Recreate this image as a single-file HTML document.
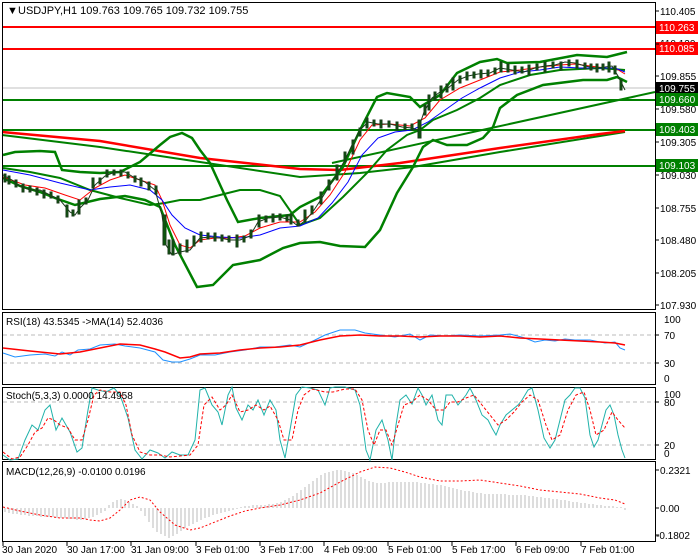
<!DOCTYPE html>
<html><head><style>
html,body{margin:0;padding:0;background:#fff;width:700px;height:560px;overflow:hidden}
svg{display:block;font-family:"Liberation Sans",sans-serif}
</style></head><body>
<svg width="700" height="560" viewBox="0 0 700 560" xmlns="http://www.w3.org/2000/svg">
<rect width="700" height="560" fill="#fff"/>
<g fill="none">
<line x1="2" y1="88" x2="655" y2="88" stroke="#c0c0c0" stroke-width="1"/>
<line x1="2" y1="27" x2="655" y2="27" stroke="#f00" stroke-width="2"/>
<line x1="2" y1="49" x2="655" y2="49" stroke="#f00" stroke-width="2"/>
<line x1="2" y1="100" x2="655" y2="100" stroke="#008000" stroke-width="2"/>
<line x1="2" y1="130" x2="655" y2="130" stroke="#008000" stroke-width="2"/>
<line x1="2" y1="166" x2="655" y2="166" stroke="#008000" stroke-width="2"/>
<polyline stroke="#008000" stroke-width="2" points="2,135 100,147 200,162 300,177 360,173 413,167 500,152 600,136 625,132"/>
<polyline stroke="#f00" stroke-width="2.5" points="2,132 100,141 200,158 264,165 300,169 340,170 400,163 500,148 600,134 625,131"/>
<polyline stroke="#008000" stroke-width="2" points="332,163 655,92"/>
<polyline stroke="#008000" stroke-width="2.5" points="3,155 15,152 40,151 55,152 62,170 80,172 100,173 120,172 140,162 160,145 170,137 182,133 192,138 200,150 210,163 227,200 238,222 260,218 290,215 300,207 320,197 343,167 360,130 377,97 387,93 410,97 420,107 440,95 457,73 480,62 497,59 507,63 540,62 577,55 607,57 627,52"/>
<polyline stroke="#008000" stroke-width="2.5" points="3,178 20,186 40,192 55,198 75,205 100,199 125,196 145,200 160,207 175,245 197,287 213,285 233,265 260,260 283,248 300,243 320,242 340,246 365,247 380,230 397,193 413,167 423,147 433,140 447,145 467,145 483,138 493,127 500,108 517,95 543,85 583,80 607,80 617,77 627,82"/>
<polyline stroke="#008000" stroke-width="2" points="3,168 30,172 60,178 90,190 120,198 150,205 165,203 180,200 200,200 220,195 240,190 260,190 280,196 300,225 320,218 343,197 367,173 387,150 407,135 420,130 433,120 457,110 480,98 500,85 530,75 560,70 600,68 625,70"/>
<polyline stroke="#f00" stroke-width="1" points="3,177 25,185 45,188 65,195 80,200 95,188 110,180 125,175 140,180 155,185 162,200 170,225 180,245 190,248 200,240 215,238 230,238 245,236 260,228 280,222 300,222 315,212 330,195 345,172 360,140 372,125 390,124 410,126 425,118 440,100 460,88 480,80 500,72 520,70 540,67 560,65 575,64 590,66 605,68 615,68 625,74"/>
<polyline stroke="#00f" stroke-width="1" points="3,170 30,175 60,183 90,190 110,187 130,185 150,190 162,200 172,215 185,228 200,235 220,237 240,238 260,235 280,228 300,226 318,218 332,203 348,182 362,155 378,138 395,132 412,130 428,122 445,110 462,98 480,88 500,78 520,72 540,70 560,67 580,68 600,68 615,68 625,72"/>
</g>
<g stroke="#1a3a1a" stroke-width="1" fill="#0a5a0a">
<polyline fill="none" points="3,175 12,180 20,186 30,190 40,190 50,195 60,200 70,212 75,215 80,208 88,200 95,185 105,176 115,172 125,172 135,178 145,182 155,190 162,215 166,245 172,255 180,252 190,250 200,238 210,237 220,238 230,240 240,240 250,236 258,222 268,218 280,217 290,220 298,226 306,220 314,210 322,198 330,185 338,172 345,160 352,145 360,130 368,122 378,124 390,124 402,127 412,128 418,130 424,112 432,98 440,92 448,88 458,80 468,76 478,74 490,73 500,68 512,70 524,72 535,68 545,66 555,65 565,62 575,63 585,66 595,68 605,67 612,66 618,76 625,90"/>
<rect x="4" y="174" width="2" height="8"/><rect x="8" y="176" width="2" height="8"/><rect x="15" y="180" width="2" height="7"/><rect x="22" y="184" width="2" height="8"/><rect x="29" y="186" width="2" height="6"/><rect x="36" y="188" width="2" height="7"/><rect x="43" y="190" width="2" height="8"/><rect x="50" y="192" width="2" height="6"/><rect x="57" y="196" width="2" height="7"/><rect x="66" y="205" width="2" height="12"/><rect x="72" y="210" width="2" height="6"/><rect x="78" y="200" width="2" height="14"/><rect x="85" y="198" width="2" height="6"/><rect x="92" y="178" width="2" height="10"/><rect x="99" y="178" width="2" height="6"/><rect x="106" y="170" width="2" height="7"/><rect x="113" y="170" width="2" height="5"/><rect x="120" y="170" width="2" height="6"/><rect x="127" y="172" width="2" height="6"/><rect x="134" y="176" width="2" height="6"/><rect x="140" y="178" width="2" height="8"/><rect x="148" y="182" width="2" height="8"/><rect x="155" y="186" width="2" height="8"/><rect x="163" y="215" width="3" height="30"/><rect x="168" y="240" width="2" height="14"/><rect x="172" y="240" width="2" height="15"/><rect x="179" y="244" width="2" height="10"/><rect x="186" y="240" width="2" height="12"/><rect x="193" y="236" width="2" height="10"/><rect x="200" y="232" width="2" height="10"/><rect x="207" y="233" width="2" height="6"/><rect x="214" y="233" width="2" height="8"/><rect x="221" y="235" width="2" height="6"/><rect x="228" y="236" width="2" height="6"/><rect x="236" y="235" width="2" height="12"/><rect x="243" y="236" width="2" height="6"/><rect x="250" y="230" width="2" height="8"/><rect x="258" y="215" width="2" height="12"/><rect x="265" y="216" width="2" height="6"/><rect x="272" y="214" width="2" height="8"/><rect x="279" y="214" width="2" height="6"/><rect x="286" y="215" width="2" height="6"/><rect x="290" y="214" width="2" height="10"/><rect x="297" y="220" width="2" height="6"/><rect x="304" y="210" width="2" height="12"/><rect x="311" y="206" width="2" height="8"/><rect x="320" y="192" width="2" height="12"/><rect x="328" y="180" width="2" height="10"/><rect x="336" y="165" width="2" height="15"/><rect x="344" y="152" width="2" height="10"/><rect x="352" y="140" width="2" height="14"/><rect x="359" y="128" width="2" height="8"/><rect x="366" y="118" width="2" height="10"/><rect x="373" y="120" width="2" height="6"/><rect x="380" y="120" width="2" height="8"/><rect x="388" y="121" width="2" height="6"/><rect x="396" y="122" width="2" height="8"/><rect x="404" y="124" width="2" height="6"/><rect x="411" y="124" width="2" height="6"/><rect x="418" y="120" width="3" height="18"/><rect x="424" y="105" width="2" height="10"/><rect x="428" y="95" width="2" height="15"/><rect x="434" y="92" width="2" height="8"/><rect x="440" y="86" width="2" height="12"/><rect x="446" y="84" width="2" height="8"/><rect x="452" y="78" width="2" height="12"/><rect x="459" y="76" width="2" height="7"/><rect x="466" y="72" width="2" height="8"/><rect x="473" y="72" width="2" height="6"/><rect x="480" y="70" width="2" height="8"/><rect x="487" y="70" width="2" height="6"/><rect x="494" y="68" width="2" height="6"/><rect x="500" y="62" width="2" height="10"/><rect x="507" y="64" width="2" height="8"/><rect x="514" y="66" width="2" height="8"/><rect x="521" y="67" width="2" height="6"/><rect x="528" y="65" width="2" height="10"/><rect x="536" y="64" width="2" height="6"/><rect x="544" y="62" width="2" height="10"/><rect x="552" y="62" width="2" height="6"/><rect x="560" y="62" width="2" height="8"/><rect x="568" y="60" width="2" height="6"/><rect x="576" y="60" width="2" height="8"/><rect x="584" y="63" width="2" height="6"/><rect x="590" y="64" width="2" height="6"/><rect x="596" y="64" width="2" height="8"/><rect x="602" y="64" width="2" height="6"/><rect x="608" y="62" width="2" height="10"/><rect x="614" y="66" width="2" height="8"/><rect x="620" y="80" width="2" height="10"/>
</g>
<text x="7" y="14" font-size="11">&#9660;</text>
<text x="18" y="14" font-size="11" fill="#000">USDJPY,H1  109.763 109.765 109.732 109.755</text>
<g fill="none" stroke="#000" stroke-width="1">
<rect x="2.5" y="2.5" width="653" height="307"/>
<rect x="2.5" y="312.5" width="653" height="72"/>
<rect x="2.5" y="387.5" width="653" height="72"/>
<rect x="2.5" y="461.5" width="653" height="80"/>
</g>
<g font-size="10" fill="#000">
<text x="660" y="15">110.405</text><text x="660" y="47">110.120</text><text x="660" y="80">109.855</text><text x="660" y="113">109.580</text><text x="660" y="146">109.305</text><text x="660" y="179">109.030</text><text x="660" y="212">108.755</text><text x="660" y="244">108.480</text><text x="660" y="277">108.205</text><text x="660" y="309">107.930</text>
</g>
<g font-size="10" fill="#fff">
<rect x="656" y="21" width="42" height="13" fill="#f00"/><text x="659" y="31">110.263</text>
<rect x="656" y="42" width="42" height="13" fill="#f00"/><text x="659" y="52">110.085</text>
<rect x="656" y="82" width="42" height="13" fill="#000"/><text x="659" y="92">109.755</text>
<rect x="656" y="93" width="42" height="13" fill="#008000"/><text x="659" y="103">109.660</text>
<rect x="656" y="123" width="42" height="13" fill="#008000"/><text x="659" y="133">109.403</text>
<rect x="656" y="159" width="42" height="13" fill="#008000"/><text x="659" y="169">109.103</text>
</g>
<g fill="none">
<line x1="3" y1="335" x2="655" y2="335" stroke="#bbb" stroke-dasharray="4,3"/>
<line x1="3" y1="363" x2="655" y2="363" stroke="#bbb" stroke-dasharray="4,3"/>
<polyline stroke="#1e90ff" stroke-width="1" points="3,353 15,357 30,355 45,354 55,356 62,352 70,355 78,350 90,349 100,345 115,344 125,346 140,348 155,352 163,360 172,362 180,362 190,359 200,355 215,355 230,352 245,350 260,347 275,347 290,345 300,347 315,340 325,335 340,330 355,330 365,333 380,335 395,337 410,334 420,340 430,335 445,336 460,335 480,336 500,335 510,334 525,338 535,342 545,340 555,341 565,339 575,340 590,340 605,343 615,342 620,348 625,350"/>
<polyline stroke="#f00" stroke-width="1.5" points="3,348 30,351 60,354 80,352 100,348 120,344 140,345 155,349 165,352 180,358 190,357 200,354 220,353 240,350 260,348 280,347 300,345 320,340 340,336 360,335 380,336 400,336 420,337 440,336 460,336 480,337 500,336 520,338 540,339 560,340 580,341 600,342 615,343 625,345"/>
</g>
<g font-size="10"><text x="6" y="325">RSI(18) 43.5345  -&gt;MA(14) 52.4036</text>
<text x="664" y="323">100</text><text x="664" y="339">70</text><text x="664" y="367">30</text><text x="664" y="382">0</text></g>
<g fill="none">
<line x1="3" y1="402" x2="655" y2="402" stroke="#bbb" stroke-dasharray="4,3"/>
<line x1="3" y1="445" x2="655" y2="445" stroke="#bbb" stroke-dasharray="4,3"/>
<polyline stroke="#20b2aa" stroke-width="1" points="3,455 10,460 18,459 25,440 32,425 38,430 45,410 50,405 56,430 62,418 70,432 77,452 82,448 88,410 92,388 98,390 106,392 114,388 120,395 128,418 135,450 142,459 150,450 158,453 165,458 172,452 180,455 188,455 195,440 200,390 205,388 212,405 218,412 222,425 228,395 232,387 236,408 242,420 248,405 253,410 258,400 264,415 270,400 276,410 280,440 285,458 290,430 296,395 302,387 310,388 318,390 325,405 330,388 335,387 345,387 355,390 360,405 366,450 370,460 376,430 382,420 388,440 392,460 396,425 400,400 406,395 412,404 418,388 422,395 426,405 432,395 438,420 442,425 446,395 452,395 458,405 462,400 466,395 470,388 476,400 482,415 488,420 492,428 496,435 500,425 506,415 512,410 518,405 522,400 528,390 532,388 538,410 544,438 550,448 555,440 560,420 565,400 570,395 575,388 580,388 585,398 590,435 594,447 598,440 602,425 606,410 610,405 614,415 618,435 622,450 625,458"/>
<polyline stroke="#f00" stroke-width="1" stroke-dasharray="3,2" points="3,452 12,459 20,457 28,445 35,432 42,428 48,418 54,420 60,425 68,428 75,440 82,440 88,420 94,395 100,390 110,392 120,392 126,405 132,435 140,452 150,455 160,455 170,457 180,456 190,455 198,445 204,405 212,397 220,410 226,405 232,395 240,412 248,410 256,405 264,410 270,406 278,420 284,440 292,440 298,410 304,395 312,389 325,392 333,392 345,389 355,389 362,400 368,430 374,445 380,430 386,430 392,445 398,425 404,405 412,402 420,395 428,400 436,410 444,410 450,402 458,402 466,398 474,395 482,405 490,415 498,425 506,420 514,412 522,402 530,395 538,400 546,425 552,440 560,435 568,410 576,395 584,392 590,410 596,435 604,430 612,412 618,420 625,428"/>
</g>
<g font-size="10"><text x="6" y="399">Stoch(5,3,3) 0.0000 14.4958</text>
<text x="664" y="398">100</text><text x="664" y="406">80</text><text x="664" y="449">20</text><text x="664" y="457">0</text></g>
<g stroke="#bbb" stroke-width="1">
<path d="M5 508v4M9 508v5M13 508v6M17 508v6M21 508v7M25 508v7M29 508v8M33 508v8M37 508v8M41 508v9M45 508v9M49 508v9M53 508v9M57 508v10M61 508v10M65 508v10M69 508v11M73 508v11M77 508v12M81 508v12M85 508v11M89 508v10M93 508v9M97 508v7M101 508v5M105 508v3M109 508v-3M113 508v-6M117 508v-8M121 508v-9M125 508v-8M129 508v-6M133 508v-4M137 508v-2M141 508v3M145 508v8M149 508v14M153 508v20M157 508v24M161 508v26M165 508v28M169 508v30M173 508v28M177 508v26M181 508v23M185 508v20M189 508v18M193 508v16M197 508v14M201 508v12M205 508v10M209 508v9M213 508v7M217 508v6M221 508v5M225 508v4M229 508v3M233 508v2M237 508v1M241 508v-1M245 508v-2M249 508v-2M253 508v-3M257 508v-3M261 508v-3M265 508v-3M269 508v-4M273 508v-4M277 508v-5M281 508v-6M285 508v-8M289 508v-10M293 508v-12M297 508v-15M301 508v-18M305 508v-21M309 508v-24M313 508v-27M317 508v-30M321 508v-33M325 508v-35M329 508v-36M333 508v-37M337 508v-38M341 508v-38M345 508v-37M349 508v-36M353 508v-35M357 508v-33M361 508v-31M365 508v-29M369 508v-27M373 508v-26M377 508v-25M381 508v-25M385 508v-25M389 508v-26M393 508v-26M397 508v-26M401 508v-26M405 508v-26M409 508v-26M413 508v-26M417 508v-26M421 508v-25M425 508v-25M429 508v-24M433 508v-24M437 508v-23M441 508v-23M445 508v-22M449 508v-21M453 508v-20M457 508v-19M461 508v-18M465 508v-17M469 508v-17M473 508v-16M477 508v-15M481 508v-15M485 508v-14M489 508v-14M493 508v-14M497 508v-14M501 508v-14M505 508v-14M509 508v-13M513 508v-13M517 508v-13M521 508v-13M525 508v-13M529 508v-12M533 508v-12M537 508v-11M541 508v-11M545 508v-10M549 508v-10M553 508v-9M557 508v-9M561 508v-8M565 508v-8M569 508v-7M573 508v-6M577 508v-6M581 508v-5M585 508v-5M589 508v-4M593 508v-4M597 508v-3M601 508v-3M605 508v-2M609 508v-2M613 508v-2M617 508v-1M621 508v-1M625 508v2"/>
</g>
<polyline fill="none" stroke="#f00" stroke-width="1" stroke-dasharray="2,2" points="3,507 20,511 40,515 60,518 80,518 90,520 100,521 110,518 120,510 130,500 140,497 150,500 160,512 175,525 190,530 200,528 215,522 230,516 245,511 260,508 280,505 300,500 320,493 340,482 360,472 375,467 390,468 405,472 420,477 440,481 460,481 480,480 500,483 520,486 540,490 560,492 580,494 600,498 615,500 625,504"/>
<g font-size="10"><text x="6" y="475">MACD(12,26,9) -0.0100 0.0196</text>
<text x="660" y="474">0.2321</text><text x="660" y="512">0.00</text><text x="656" y="539">-0.1802</text></g>
<g stroke="#000" stroke-width="1">
<path d="M656 11h3M656 44h3M656 76h3M656 109h3M656 142h3M656 175h3M656 208h3M656 240h3M656 273h3M656 305h3M656 335h3M656 363h3M656 402h3M656 445h3M656 470h3M656 508h3M656 535h3"/>
<path d="M3 542v4M67 542v4M131 542v4M196 542v4M260 542v4M324 542v4M388 542v4M452 542v4M516 542v4M581 542v4"/>
</g>
<g font-size="10">
<text x="2" y="553">30 Jan 2020</text><text x="67" y="553">30 Jan 17:00</text><text x="131" y="553">31 Jan 09:00</text><text x="196" y="553">3 Feb 01:00</text><text x="260" y="553">3 Feb 17:00</text><text x="324" y="553">4 Feb 09:00</text><text x="388" y="553">5 Feb 01:00</text><text x="452" y="553">5 Feb 17:00</text><text x="516" y="553">6 Feb 09:00</text><text x="581" y="553">7 Feb 01:00</text>
</g>
</svg>
</body></html>
